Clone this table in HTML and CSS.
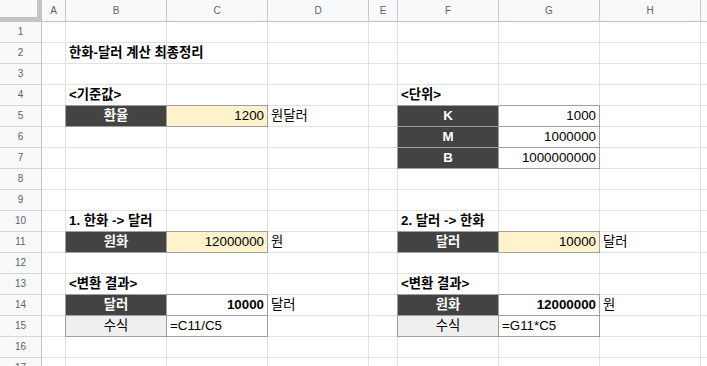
FILE: index.html
```html
<!DOCTYPE html>
<html lang="ko">
<head>
<meta charset="utf-8">
<title>한화-달러 계산 최종정리</title>
<link rel="stylesheet" href="styles.css">
</head>
<body>
<div class="sheet">
  <div class="row hrow">
    <div class="corner"></div>
    <div class="h">A</div><div class="h">B</div><div class="h">C</div><div class="h">D</div><div class="h">E</div><div class="h">F</div><div class="h">G</div><div class="h">H</div><div class="h"></div>
  </div>
  <div class="row"><div class="rh">1</div><div class="c"></div><div class="c"></div><div class="c"></div><div class="c"></div><div class="c"></div><div class="c"></div><div class="c"></div><div class="c"></div><div class="c"></div></div>
  <div class="row"><div class="rh">2</div><div class="c"></div><div class="c b">한화-달러 계산 최종정리</div><div class="c"></div><div class="c"></div><div class="c"></div><div class="c"></div><div class="c"></div><div class="c"></div><div class="c"></div></div>
  <div class="row"><div class="rh">3</div><div class="c"></div><div class="c"></div><div class="c"></div><div class="c"></div><div class="c"></div><div class="c"></div><div class="c"></div><div class="c"></div><div class="c"></div></div>
  <div class="row"><div class="rh">4</div><div class="c"></div><div class="c b">&lt;기준값&gt;</div><div class="c"></div><div class="c"></div><div class="c"></div><div class="c b">&lt;단위&gt;</div><div class="c"></div><div class="c"></div><div class="c"></div></div>
  <div class="row"><div class="rh">5</div><div class="c"></div><div class="c f d">환율</div><div class="c f y r">1200</div><div class="c">원달러</div><div class="c"></div><div class="c f d">K</div><div class="c f r">1000</div><div class="c"></div><div class="c"></div></div>
  <div class="row"><div class="rh">6</div><div class="c"></div><div class="c"></div><div class="c"></div><div class="c"></div><div class="c"></div><div class="c f d">M</div><div class="c f r">1000000</div><div class="c"></div><div class="c"></div></div>
  <div class="row"><div class="rh">7</div><div class="c"></div><div class="c"></div><div class="c"></div><div class="c"></div><div class="c"></div><div class="c f d">B</div><div class="c f r">1000000000</div><div class="c"></div><div class="c"></div></div>
  <div class="row"><div class="rh">8</div><div class="c"></div><div class="c"></div><div class="c"></div><div class="c"></div><div class="c"></div><div class="c"></div><div class="c"></div><div class="c"></div><div class="c"></div></div>
  <div class="row"><div class="rh">9</div><div class="c"></div><div class="c"></div><div class="c"></div><div class="c"></div><div class="c"></div><div class="c"></div><div class="c"></div><div class="c"></div><div class="c"></div></div>
  <div class="row"><div class="rh">10</div><div class="c"></div><div class="c b">1. 한화 -&gt; 달러</div><div class="c"></div><div class="c"></div><div class="c"></div><div class="c b">2. 달러 -&gt; 한화</div><div class="c"></div><div class="c"></div><div class="c"></div></div>
  <div class="row"><div class="rh">11</div><div class="c"></div><div class="c f d">원화</div><div class="c f y r">12000000</div><div class="c">원</div><div class="c"></div><div class="c f d">달러</div><div class="c f y r">10000</div><div class="c">달러</div><div class="c"></div></div>
  <div class="row"><div class="rh">12</div><div class="c"></div><div class="c"></div><div class="c"></div><div class="c"></div><div class="c"></div><div class="c"></div><div class="c"></div><div class="c"></div><div class="c"></div></div>
  <div class="row"><div class="rh">13</div><div class="c"></div><div class="c b">&lt;변환 결과&gt;</div><div class="c"></div><div class="c"></div><div class="c"></div><div class="c b">&lt;변환 결과&gt;</div><div class="c"></div><div class="c"></div><div class="c"></div></div>
  <div class="row"><div class="rh">14</div><div class="c"></div><div class="c f d">달러</div><div class="c f r b">10000</div><div class="c">달러</div><div class="c"></div><div class="c f d">원화</div><div class="c f r b">12000000</div><div class="c">원</div><div class="c"></div></div>
  <div class="row"><div class="rh">15</div><div class="c"></div><div class="c f g">수식</div><div class="c f">=C11/C5</div><div class="c"></div><div class="c"></div><div class="c f g">수식</div><div class="c f">=G11*C5</div><div class="c"></div><div class="c"></div></div>
  <div class="row"><div class="rh">16</div><div class="c"></div><div class="c"></div><div class="c"></div><div class="c"></div><div class="c"></div><div class="c"></div><div class="c"></div><div class="c"></div><div class="c"></div></div>
  <div class="row"><div class="rh">17</div><div class="c"></div><div class="c"></div><div class="c"></div><div class="c"></div><div class="c"></div><div class="c"></div><div class="c"></div><div class="c"></div><div class="c"></div></div>
</div>
</body>
</html>
```
FILE: styles.css
```css
html, body {
  margin: 0;
  padding: 0;
  background: #ffffff;
  overflow: hidden;
}

.sheet {
  width: 707px;
  height: 366px;
  overflow: hidden;
  font-family: "Liberation Sans", "Noto Sans CJK KR", sans-serif;
  font-size: 13.333px;
  color: #000000;
}

.row {
  display: grid;
  grid-template-columns: 42px 24px 101px 101px 101px 29px 101px 101px 101px 40px;
  height: 21px;
}

.hrow {
  height: 22px;
}

.corner {
  box-sizing: border-box;
  background: #f8f9fa;
  border-right: 5px solid #c4c4c4;
  border-bottom: 5px solid #c4c4c4;
}

.h {
  box-sizing: border-box;
  background: #f8f9fa;
  border-right: 1px solid #c7c7c7;
  border-bottom: 1px solid #c0c0c0;
  color: #5f6368;
  font-size: 10px;
  line-height: 21px;
  text-align: center;
}

.rh {
  box-sizing: border-box;
  background: #f8f9fa;
  border-right: 1px solid #c0c0c0;
  border-bottom: 1px solid #d6d6d6;
  color: #5f6368;
  font-size: 10px;
  line-height: 20px;
  text-align: center;
}

.c {
  box-sizing: border-box;
  border-right: 1px solid #e2e2e3;
  border-bottom: 1px solid #e2e2e3;
  padding: 0 3px;
  line-height: 20px;
  white-space: nowrap;
  min-width: 0;
}

.b {
  font-weight: bold;
}

.r {
  text-align: right;
}

.f {
  border-right-color: #a0a0a0;
  border-bottom-color: #a0a0a0;
  box-shadow: -1px 0 0 #a0a0a0, 0 -1px 0 #a0a0a0, -1px -1px 0 #a0a0a0;
}

.d {
  background: #434343;
  color: #ffffff;
  font-weight: bold;
  text-align: center;
}

.y {
  background: #fff2cc;
}

.g {
  background: #efefef;
  text-align: center;
}
```
